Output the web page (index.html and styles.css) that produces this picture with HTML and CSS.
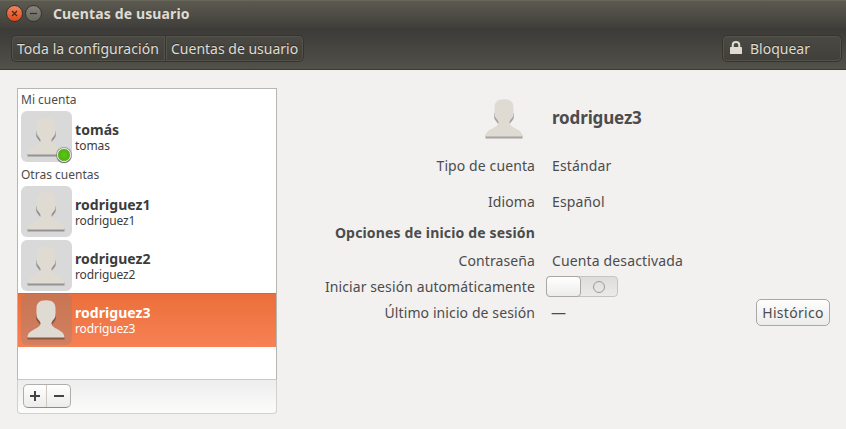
FILE: index.html
```html
<!DOCTYPE html>
<html lang="es">
<head>
<meta charset="utf-8">
<title>Cuentas de usuario</title>
<link rel="stylesheet" href="styles.css">
</head>
<body>
<svg class="defs" width="0" height="0">
  <defs>
    <symbol id="person" viewBox="0 0 38 40">
      <path class="shade" d="M9.200 14V18C9.200 21 11.500 22 13.500 25.500H24.500C26.500 22 28.800 21 28.800 18V14ZM.5 36.500V39.500H37.500V36.500Z"/>
      <path class="figure" d="M19 .3C26 .3 28.500 3.500 28.500 8.500V15C28.500 18.500 25 20.500 24.500 23C24.300 29.500 37.500 29 37.500 37.500H.5C.5 29 13.700 29.500 13.500 23C13 20.500 9.500 18.500 9.500 15V8.500C9.500 3.500 12 .3 19 .3Z"/>
    </symbol>
  </defs>
</svg>
<header class="header">
  <div class="titlebar">
    <span class="winbtn close"><svg viewBox="0 0 15 15"><path d="M5 5l5 5M10 5l-5 5"/></svg></span>
    <span class="winbtn minimize"><svg viewBox="0 0 15 15"><path d="M4 7.500h7"/></svg></span>
    <h1 class="title">Cuentas de usuario</h1>
  </div>
  <nav class="toolbar">
    <div class="crumbs">
      <button class="crumb first">Toda la configuración</button>
      <button class="crumb second">Cuentas de usuario</button>
    </div>
    <button class="lock">
      <svg viewBox="0 0 12 13"><path d="M2.750 7V4Q2.750 1 6 1T9.250 4V7" class="shackle"/><rect y="6" width="12" height="7" rx=".5" class="lockbody"/></svg>
      <span>Bloquear</span>
    </button>
  </nav>
</header>
<main class="content">
  <section class="sidebar">
    <div class="list">
      <div class="group">Mi cuenta</div>
      <div class="user">
        <div class="avatar"><svg class="person"><use href="#person"/></svg><i class="online"></i></div>
        <div class="names"><b>tomás</b><span>tomas</span></div>
      </div>
      <div class="group">Otras cuentas</div>
      <div class="user">
        <div class="avatar"><svg class="person"><use href="#person"/></svg></div>
        <div class="names"><b>rodriguez1</b><span>rodriguez1</span></div>
      </div>
      <div class="user">
        <div class="avatar"><svg class="person"><use href="#person"/></svg></div>
        <div class="names"><b>rodriguez2</b><span>rodriguez2</span></div>
      </div>
      <div class="user selected">
        <div class="avatar"><svg class="person"><use href="#person"/></svg></div>
        <div class="names"><b>rodriguez3</b><span>rodriguez3</span></div>
      </div>
    </div>
    <div class="actions">
      <div class="pair">
        <button><svg viewBox="0 0 10 10"><path d="M0 5h10M5 0v10"/></svg></button>
        <button><svg viewBox="0 0 10 10"><path d="M0 5h10"/></svg></button>
      </div>
    </div>
  </section>
  <section class="details">
    <div class="portrait"><svg class="person"><use href="#person"/></svg></div>
    <h2>rodriguez3</h2>
    <div class="label">Tipo de cuenta</div><div class="value">Estándar</div>
    <div class="label">Idioma</div><div class="value">Español</div>
    <div class="label strong">Opciones de inicio de sesión</div><div></div>
    <div class="label">Contraseña</div><div class="value">Cuenta desactivada</div>
    <div class="label">Iniciar sesión automáticamente</div><div class="value"><div class="switch"><i class="knob"></i><i class="off"></i></div></div>
    <div class="label">Último inicio de sesión</div>
    <div class="value"><span class="dash">—</span><button class="history">Histórico</button></div>
  </section>
</main>
</body>
</html>
```
FILE: styles.css
```css
* { box-sizing: border-box; }
body { margin: 0; height: 429px; overflow: hidden; background: #f2f1f0; color: #4c4c4c; font: 14px/18px "Noto Sans", sans-serif; letter-spacing: .1px; white-space: nowrap; }
button { font: inherit; letter-spacing: inherit; padding: 0; margin: 0; color: inherit; }
.defs { position: absolute; }
.shade { fill: rgba(0,0,0,.32); }
.figure { fill: #dfdbd2; }
.header { height: 70px; border-bottom: 1px solid #3c3b37; color: #dfdbd2; background: linear-gradient(#5c5a50 0, #3f3e3a 27px, #3c3b37 28px, #3c3b37 29px, #52514a 69px); border-top: 1px solid #66655a; }
.titlebar { height: 27px; display: flex; align-items: flex-start; padding: 4px 0 0 6px; }
.winbtn { width: 17px; height: 17px; border-radius: 50%; border: 1px solid #33322e; margin-right: 2px; }
.winbtn svg { display: block; width: 15px; height: 15px; fill: none; stroke: #3c2b22; stroke-width: 1.2; }
.close { background: linear-gradient(#f4845d, #df4a16); }
.minimize { background: linear-gradient(#85837b, #686760); }
.title { margin: 0 0 0 9px; font-size: 14px; line-height: 18px; letter-spacing: .13px; }
.toolbar { height: 41px; display: flex; justify-content: space-between; padding: 7px 4px 0 11px; }
.crumbs { display: flex; height: 27px; }
.crumb, .lock { height: 27px; border: 1px solid #35342f; background: linear-gradient(#4a4943, #403f3a); box-shadow: inset 0 0 0 1px #54534b; text-shadow: 0 -1px #2e2d2a; border-radius: 5px; }
.crumb { text-align: left; }
.first { width: 154px; padding-left: 5px; border-right-width: 0; border-radius: 5px 0 0 5px; letter-spacing: .05px; }
.second { width: 139px; padding-left: 5px; border-radius: 0 5px 5px 0; letter-spacing: 0; }
.lock { width: 120px; display: flex; align-items: center; padding-left: 7px; gap: 8px; letter-spacing: 0; }
.lock svg { width: 12px; height: 13px; margin-top: -2px; }
.shackle { fill: none; stroke: #dfdbd2; stroke-width: 2; }
.lockbody { fill: #dfdbd2; }
.content { display: flex; padding-top: 18px; }
.sidebar { width: 260px; margin-left: 17px; }
.list { height: 292px; border: 1px solid #b8b6b3; border-bottom-color: #cfc8c1; background: #fff; color: #3c3c3c; }
.group { height: 21px; padding-left: 3px; font-size: 12px; line-height: 22px; color: #4c4c4c; letter-spacing: 0; }
.user { height: 54px; display: flex; align-items: center; padding-left: 3px; }
.avatar { position: relative; width: 51px; height: 51px; border-radius: 6px; background: #d9d9d9; display: flex; justify-content: center; padding-top: 6px; margin-left: -.4px; margin-bottom: 1px; }
.person { width: 38px; height: 40px; display: block; }
.online { position: absolute; right: 1px; bottom: 0; width: 14px; height: 14px; border-radius: 50%; border: 1.5px solid #e8e8e8; background: radial-gradient(#5cc816, #46a508); box-shadow: 0 0 0 1px #77777799, 0 1px 1px #555; }
.names { display: flex; flex-direction: column; margin-left: 3.4px; }
.names b { line-height: 17px; letter-spacing: .05px; }
.names span { font-size: 12px; line-height: 15px; letter-spacing: -.1px; }
.selected { background: linear-gradient(#d9652f 0, #d9652f 1px, #ea6f3b 1px, #f78154); color: #fff; }
.selected .avatar { background: rgba(140,130,125,.35); }
.actions { height: 34px; border: 1px solid #d2d0cd; border-top: 0; border-radius: 0 0 4px 4px; background: linear-gradient(#ededec, #fcfcfc); padding: 4px 5px; }
.pair { display: flex; width: 48px; height: 24px; border: 1px solid #b0aeab; border-bottom-color: #8f8d8a; border-radius: 5px; background: linear-gradient(#fff, #ececeb); }
.pair button { width: 22px; border: 0; background: none; display: flex; align-items: center; justify-content: center; }
.pair button + button { width: 24px; border-left: 1px solid #cfc8c1; }
.pair svg { width: 10px; height: 10px; stroke: #444; stroke-width: 2; }
.details { margin-top: 6px; width: 569px; display: grid; grid-template-columns: 258px 278px; column-gap: 17px; grid-template-rows: 54px 36px 36px 27px 27px 26px 26px; align-items: center; }
.portrait { justify-self: end; width: 50px; height: 48px; align-self: start; padding-top: 5px; }
.details h2 { margin: 0 0 6px; font-size: 17px; line-height: 22px; letter-spacing: -.15px; }
.label { text-align: right; }
.strong { font-weight: 700; letter-spacing: .16px; padding-bottom: 2px; }
.value { display: flex; align-items: center; letter-spacing: .14px; }
.switch { width: 72px; height: 21px; margin-left: -6px; margin-bottom: 1px; border: 1px solid #c5c4c2; border-radius: 4px; background: linear-gradient(#dedddc, #ebeae9); display: flex; align-items: center; }
.knob { width: 35px; height: 21px; margin-left: -1px; border: 1px solid #aaa8a5; border-radius: 4px; background: linear-gradient(#fff, #ececeb); flex: none; }
.off { width: 12px; height: 12px; border: 1px solid #999; border-radius: 50%; margin-left: 12px; }
.dash { margin: -2px 0 0 -1px; font-size: 15px; }
.history { width: 74px; height: 27px; padding-top: 2px; margin-bottom: 2px; border: 1px solid #aaa8a5; border-radius: 5px; background: linear-gradient(#fdfdfd, #ececeb); margin-left: auto; flex: none; letter-spacing: .3px; }
```
